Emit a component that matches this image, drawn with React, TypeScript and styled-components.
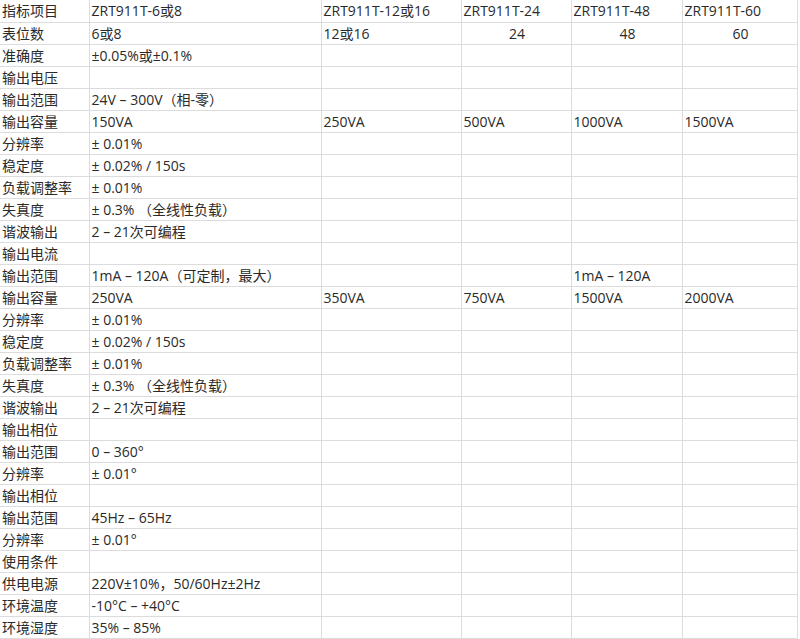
import React from "react";
import styled, { createGlobalStyle } from "styled-components";

const Global = createGlobalStyle`
  html, body { margin: 0; padding: 0; background: #ffffff; }
  body { font-family: "Open Sans", "Noto Sans CJK SC", sans-serif; }
`;

const Table = styled.table`
  border-collapse: collapse;
  table-layout: fixed;
  width: 797px;
  font-family: "Open Sans", "Noto Sans CJK SC", sans-serif;
  font-size: 14px;
  color: #2a2a2a;
`;

const Row = styled.tr`
  height: 22px;
`;

const Cell = styled.td<{ $center?: boolean }>`
  border: 1px solid #dcdcdc;
  border-top: none;
  border-left: none;
  padding: 0 0 0 2px;
  height: 21px;
  line-height: 21px;
  white-space: nowrap;
  overflow: hidden;
  text-align: ${(p) => (p.$center ? "center" : "left")};
  vertical-align: middle;
`;

const widths = [89, 232, 140, 110, 111, 115];

type C = string | { t: string; c: boolean };

const rows: C[][] = [
  ["指标项目", "ZRT911T-6或8", "ZRT911T-12或16", "ZRT911T-24", "ZRT911T-48", "ZRT911T-60"],
  ["表位数", "6或8", "12或16", { t: "24", c: true }, { t: "48", c: true }, { t: "60", c: true }],
  ["准确度", "±0.05%或±0.1%"],
  ["输出电压"],
  ["输出范围", "24V – 300V（相-零）"],
  ["输出容量", "150VA", "250VA", "500VA", "1000VA", "1500VA"],
  ["分辨率", "± 0.01%"],
  ["稳定度", "± 0.02% / 150s"],
  ["负载调整率", "± 0.01%"],
  ["失真度", "± 0.3% （全线性负载）"],
  ["谐波输出", "2 – 21次可编程"],
  ["输出电流"],
  ["输出范围", "1mA – 120A（可定制，最大）", "", "", "1mA – 120A"],
  ["输出容量", "250VA", "350VA", "750VA", "1500VA", "2000VA"],
  ["分辨率", "± 0.01%"],
  ["稳定度", "± 0.02% / 150s"],
  ["负载调整率", "± 0.01%"],
  ["失真度", "± 0.3% （全线性负载）"],
  ["谐波输出", "2 – 21次可编程"],
  ["输出相位"],
  ["输出范围", "0 – 360°"],
  ["分辨率", "± 0.01°"],
  ["输出相位"],
  ["输出范围", "45Hz – 65Hz"],
  ["分辨率", "± 0.01°"],
  ["使用条件"],
  ["供电电源", "220V±10%，50/60Hz±2Hz"],
  ["环境温度", "-10°C – +40°C"],
  ["环境湿度", "35% – 85%"],
];

export default function App() {
  return (
    <>
      <Global />
      <Table>
        <colgroup>
          {widths.map((w, i) => (
            <col key={i} style={{ width: w }} />
          ))}
        </colgroup>
        <tbody>
          {rows.map((r, i) => (
            <Row key={i}>
              {widths.map((_, j) => {
                const v = r[j];
                if (v === undefined) return <Cell key={j} />;
                if (typeof v === "string") return <Cell key={j}>{v}</Cell>;
                return (
                  <Cell key={j} $center={v.c}>
                    {v.t}
                  </Cell>
                );
              })}
            </Row>
          ))}
        </tbody>
      </Table>
    </>
  );
}
